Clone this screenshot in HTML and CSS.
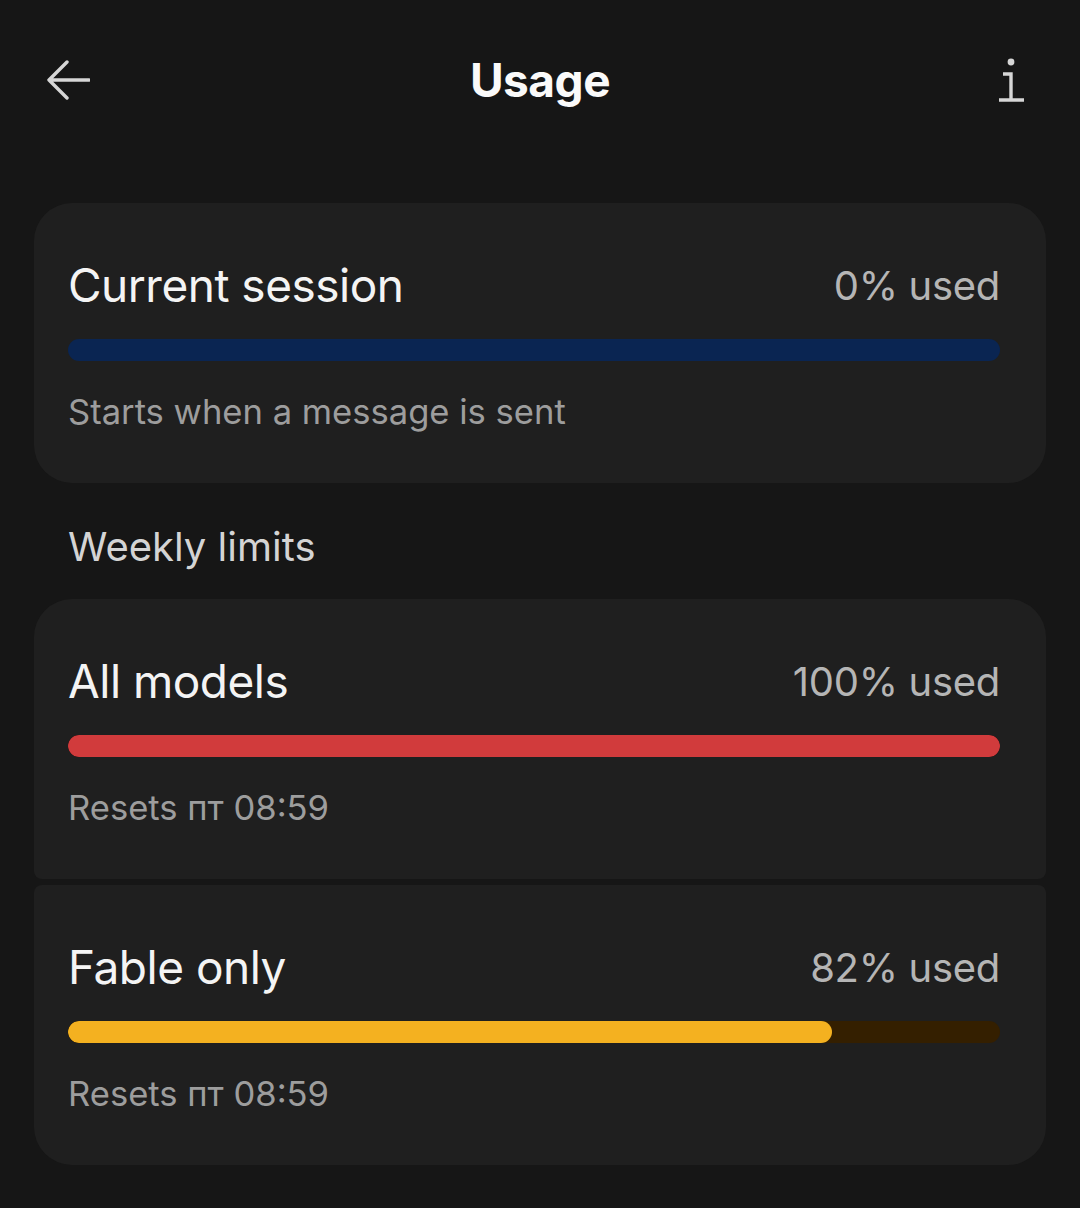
FILE: index.html
```html
<!DOCTYPE html>
<html lang="en">
<head>
<meta charset="utf-8">
<link rel="stylesheet" href="styles.css">
</head>
<body>
<div class="screen">
  <header class="topbar">
    <button class="icon-btn back" aria-label="Back">
      <svg width="44" height="40" viewBox="0 0 44 40"><path d="M21 2 L3 20 L21 38 M3 20 H43" fill="none" stroke="#d6d6d6" stroke-width="3.4" stroke-linecap="round" stroke-linejoin="round"/></svg>
    </button>
    <h1 class="title">Usage</h1>
    <button class="icon-btn info" aria-label="Info">
      <svg width="28" height="46" viewBox="0 0 28 46"><circle cx="13" cy="4" r="3.4" fill="#d6d6d6"/><path d="M5 16 H13 V42 M1 42 H26" fill="none" stroke="#d6d6d6" stroke-width="3.4" stroke-linecap="butt"/></svg>
    </button>
  </header>

  <section class="card single">
    <div class="row">
      <span class="name">Current session</span>
      <span class="pct">0% used</span>
    </div>
    <div class="bar bar-blue"><div class="fill" style="width:0%"></div></div>
    <div class="sub">Starts when a message is sent</div>
  </section>

  <div class="section-label">Weekly limits</div>

  <div class="group">
    <section class="card first">
      <div class="row">
        <span class="name">All models</span>
        <span class="pct">100% used</span>
      </div>
      <div class="bar bar-red"><div class="fill" style="width:100%"></div></div>
      <div class="sub">Resets пт 08:59</div>
    </section>
    <section class="card last">
      <div class="row">
        <span class="name">Fable only</span>
        <span class="pct">82% used</span>
      </div>
      <div class="bar bar-yellow"><div class="fill" style="width:82%"></div></div>
      <div class="sub">Resets пт 08:59</div>
    </section>
  </div>
</div>
</body>
</html>
```

FILE: styles.css
```css
* { box-sizing: border-box; }
html, body { margin: 0; padding: 0; }
body {
  background: #161616;
  font-family: Inter, "Noto Sans", sans-serif;
  color: #f2f2f2;
  width: 1080px;
  height: 1208px;
  overflow: hidden;
}
.screen {
  padding: 0 34px;
}
.topbar {
  height: 160px;
  display: flex;
  align-items: center;
  justify-content: space-between;
  position: relative;
}
.icon-btn {
  background: none;
  border: 0;
  padding: 0;
  display: flex;
  align-items: center;
}
.back { margin-left: 12px; }
.info { margin-right: 20px; margin-top: 2px; }
.title {
  margin: 0;
  font-size: 46px;
  font-weight: 700;
  color: #fafafa;
  letter-spacing: -0.5px;
}
.topbar .title {
  position: absolute;
  left: 0; right: 0;
  text-align: center;
  pointer-events: none;
}
.card {
  background: #1f1f1f;
  padding: 52px 46px 47px 34px;
  margin-top: 43px;
}
.single { border-radius: 38px; }
.group { display: flex; flex-direction: column; gap: 6px; }
.group .card { margin-top: 0; }
.first { border-radius: 38px 38px 8px 8px; }
.last { border-radius: 8px 8px 38px 38px; }
.row {
  display: flex;
  justify-content: space-between;
  align-items: center;
  height: 60px;
}
.name {
  font-size: 46px;
  color: #f4f4f4;
  font-weight: 400;
  letter-spacing: -0.5px;
}
.pct {
  font-size: 40px;
  color: #b5b5b5;
  letter-spacing: -0.3px;
}
.bar {
  margin-top: 24px;
  height: 22px;
  border-radius: 11px;
  overflow: hidden;
}
.bar .fill { height: 100%; border-radius: 11px; }
.bar-blue { background: #0a2552; }
.bar-red { background: #3a1212; }
.bar-red .fill { background: #d13b3c; }
.bar-yellow { background: #341f00; }
.bar-yellow .fill { background: #f4b120; }
.sub {
  margin-top: 25px;
  height: 50px;
  line-height: 50px;
  font-size: 34.6px;
  color: #9d9d9d;
}
.section-label {
  height: 116px;
  line-height: 128px;
  padding-left: 34px;
  font-size: 40px;
  color: #d4d4d4;
}
```
